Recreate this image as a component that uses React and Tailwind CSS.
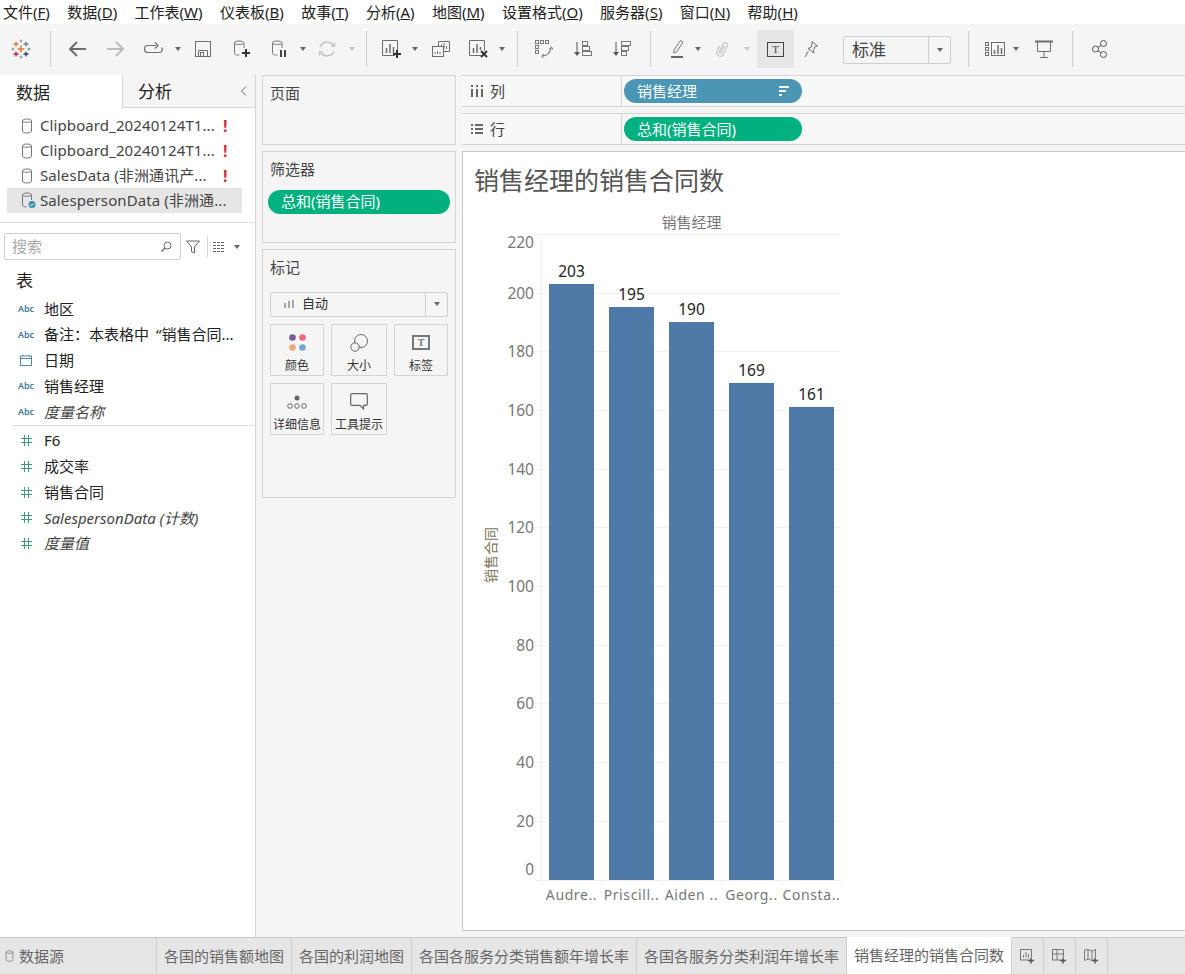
import React from 'react';

const FONT = '"Noto Sans", "Noto Sans CJK SC", sans-serif';

const menus = [
  ['文件(', 'F', ')'], ['数据(', 'D', ')'], ['工作表(', 'W', ')'], ['仪表板(', 'B', ')'], ['故事(', 'T', ')'], ['分析(', 'A', ')'],
  ['地图(', 'M', ')'], ['设置格式(', 'O', ')'], ['服务器(', 'S', ')'], ['窗口(', 'N', ')'], ['帮助(', 'H', ')'],
];

function Sep({ className }) {
  return <div className={`w-px h-9 bg-[#d0d0d0] shrink-0 ${className}`} />;
}

function Caret({ className, light }) {
  return (
    <svg width="6" height="4" viewBox="0 0 6 4" className={`shrink-0 ${className}`}>
      <path d="M0 0h6L3 4z" fill={light ? '#c4c4c4' : '#666'} />
    </svg>
  );
}

function TableauLogo({ className }) {
  const cross = (cx, cy, r, c, sw) => (
    <path d={`M${cx - r} ${cy}H${cx + r}M${cx} ${cy - r}V${cy + r}`} stroke={c} strokeWidth={sw} fill="none" />
  );
  return (
    <svg width="20" height="20" viewBox="0 0 20 20" className={`shrink-0 ${className}`}>
      {cross(10, 10, 3.5, '#e8762b', 1.5)}
      {cross(5, 5, 2.5, '#e8762b', 1.3)}
      {cross(15, 5, 2.5, '#5b879b', 1.3)}
      {cross(5, 15, 2.5, '#c72037', 1.3)}
      {cross(15, 15, 2.5, '#1f447a', 1.3)}
      {cross(10, 2, 1.5, '#7099a6', 1)}
      {cross(10, 18, 1.5, '#7099a6', 1)}
      {cross(2, 10, 1.5, '#7099a6', 1)}
      {cross(18, 10, 1.5, '#5b879b', 1)}
    </svg>
  );
}

function DbIcon({ className, w = 12, h = 16, color = '#777' }) {
  return (
    <svg width={w} height={h} viewBox="0 0 12 16" className={`shrink-0 ${className}`} fill="none" stroke={color}>
      <path d="M1.5 3c0-1.3 2-2 4.5-2s4.5.7 4.5 2v10c0 1.3-2 2-4.5 2s-4.500-.7-4.500-2z" />
      <path d="M1.500 3.500c1 1 8 1 9 0" />
    </svg>
  );
}

function Pill({ color, children, sort, className }) {
  return (
    <div className={`h-6 rounded-full flex items-center justify-between pl-[13px] pr-3 text-white text-[15px] ${color} ${className}`}>
      <span>{children}</span>
      {sort && (
        <svg width="11" height="10" viewBox="0 0 11 10" fill="#fff">
          <rect x="0" y="0" width="10" height="2" />
          <rect x="0" y="4" width="7" height="2" />
          <rect x="0" y="8" width="3" height="2" />
        </svg>
      )}
    </div>
  );
}

function Toolbar() {
  return (
    <div className="h-[51px] pb-px bg-[#f5f5f5] flex items-center shrink-0">
      <TableauLogo className="ml-[11px]" />
      <Sep className="ml-[19px]" />
      <svg width="18" height="16" viewBox="0 0 18 16" className="ml-[17px] shrink-0" fill="none" stroke="#6e6e6e" strokeWidth="2">
        <path d="M18 8H2M9 1L2 8l7 7" />
      </svg>
      <svg width="18" height="16" viewBox="0 0 18 16" className="ml-[21px] shrink-0" fill="none" stroke="#bdbdbd" strokeWidth="2">
        <path d="M0 8h16M9 1l7 7-7 7" />
      </svg>
      <svg width="19" height="14" viewBox="0 0 19 14" className="ml-[19px] shrink-0" fill="none" stroke="#6e6e6e" strokeWidth="1.2">
        <path d="M12 3.500H4a3 3 0 0 0 0 7h11a3 3 0 0 0 2.500-5" />
        <path d="M11 .5l3 3-3 3" />
      </svg>
      <Caret className="ml-3" />
      <svg width="16" height="16" viewBox="0 0 16 16" className="ml-[14px] shrink-0" fill="none" stroke="#6e6e6e">
        <rect x=".5" y=".5" width="15" height="15" />
        <path d="M3.500 15.500v-6h9v6" />
        <rect x="5.500" y="11.500" width="3" height="4" />
      </svg>
      <svg width="17" height="18" viewBox="0 0 17 18" className="ml-[23px] shrink-0" fill="none">
        <g stroke="#777"><path d="M.5 3C.5 1.500 2.500 1 5 1s5 .5 5 2v5M.5 3v10.500c0 1 1.500 1.500 4 1.500h1M.5 3.500c1 1.200 8.500 1.200 9.500 0" /></g>
        <path d="M12 9v8M8 13h8" stroke="#333" strokeWidth="2" />
      </svg>
      <svg width="16" height="18" viewBox="0 0 16 18" className="ml-[21px] shrink-0" fill="none">
        <g stroke="#777"><path d="M.5 3C.5 1.500 2.500 1 5 1s5 .5 5 2v5M.5 3v10.500c0 1 1.500 1.500 4 1.500h1M.5 3.500c1 1.200 8.500 1.200 9.500 0" /></g>
        <path d="M9 10v7M13 10v7" stroke="#444" strokeWidth="2" />
      </svg>
      <Caret className="ml-3" />
      <svg width="18" height="18" viewBox="0 0 18 18" className="ml-3 shrink-0" fill="none" stroke="#c4c4c4" strokeWidth="1.500">
        <path d="M2 7a7.500 7.500 0 0 1 13-2M16 11a7.500 7.500 0 0 1-13 2" />
        <path d="M13 6h3.500V2.500M5 12H1.500v3.500" />
      </svg>
      <Caret light className="ml-[13px]" />
      <Sep className="ml-[11px]" />
      <svg width="20" height="18" viewBox="0 0 20 18" className="ml-[15px] shrink-0" fill="none">
        <path d="M13 15.500H.5V.5h15v10" stroke="#6e6e6e" />
        <path d="M4.500 13V8M8 13V4M11.500 13V7" stroke="#6e6e6e" strokeWidth="1.500" />
        <path d="M15 10v8M11 14h8" stroke="#333" strokeWidth="2" />
      </svg>
      <Caret className="ml-[10px]" />
      <svg width="18" height="16" viewBox="0 0 18 16" className="ml-[14px] shrink-0" fill="none" stroke="#6e6e6e">
        <path d="M6.500 5V.5h11v10H12" />
        <path d="M9.500 8V3.500M12 8V2M14.500 8V5" />
        <rect x=".5" y="5.500" width="11" height="10" fill="#f5f5f5" />
        <path d="M3 13v-2M5.500 13v-3M8 13v-2" />
      </svg>
      <svg width="20" height="18" viewBox="0 0 20 18" className="ml-[19px] shrink-0" fill="none">
        <path d="M12 15.500H.5V.5h15v10" stroke="#6e6e6e" />
        <path d="M4.500 13V8M8 13V4M11.500 10V7" stroke="#6e6e6e" strokeWidth="1.500" />
        <path d="M12 11l6 6M18 11l-6 6" stroke="#333" strokeWidth="2" />
      </svg>
      <Caret className="ml-[10px]" />
      <Sep className="ml-3" />
      <svg width="18" height="18" viewBox="0 0 18 18" className="ml-[17px] shrink-0" fill="none" stroke="#777">
        <rect x=".5" y=".5" width="3" height="3" /><rect x="5.500" y=".5" width="3" height="3" /><rect x="10.500" y=".5" width="3" height="3" />
        <rect x=".5" y="5.500" width="3" height="3" /><rect x=".5" y="10.500" width="3" height="3" />
        <path d="M7 16c5 0 8-3 9-8" strokeWidth="1.200" />
        <path d="M14 9l2.500-2 1.500 3M9 14l-2.500 2 2 2" />
      </svg>
      <svg width="18" height="16" viewBox="0 0 18 16" className="ml-[21px] shrink-0" fill="none" stroke="#777">
        <path d="M3 1v13" stroke="#555" />
        <path d="M0 11l3 4 3-4z" fill="#555" stroke="none" />
        <rect x="8.500" y=".5" width="5" height="4" /><rect x="8.500" y="5.500" width="7" height="4" /><rect x="8.500" y="10.500" width="9" height="4" />
      </svg>
      <svg width="18" height="16" viewBox="0 0 18 16" className="ml-[21px] shrink-0" fill="none" stroke="#777">
        <path d="M3 1v13" stroke="#555" />
        <path d="M0 11l3 4 3-4z" fill="#555" stroke="none" />
        <rect x="8.500" y=".5" width="9" height="4" /><rect x="8.500" y="5.500" width="7" height="4" /><rect x="8.500" y="10.500" width="5" height="4" />
      </svg>
      <Sep className="ml-[19px]" />
      <svg width="14" height="20" viewBox="0 0 14 20" className="ml-[19px] shrink-0" fill="none">
        <path d="M4 11L10.500 1.500l2.500 1.700L6.500 13l-2.800 1z" stroke="#777" />
        <rect x="1" y="17" width="12" height="2" fill="#666" />
      </svg>
      <Caret className="ml-[11px]" />
      <svg width="13" height="18" viewBox="0 0 13 18" className="ml-[15px] shrink-0" fill="none" stroke="#c4c4c4" strokeWidth="1.200">
        <path d="M2.500 7v6a3.500 3.500 0 0 0 7 0V4a2.300 2.300 0 0 0-4.600 0v8.500a1 1 0 0 0 2 0V5" transform="rotate(25 6 9)" />
      </svg>
      <Caret light className="ml-[15px]" />
      <div className="ml-[7px] w-[37px] h-[38px] bg-[#e6e6e6] flex items-center justify-center shrink-0">
        <div className="w-[17px] h-[15px] border border-[#444] flex items-center justify-center text-[11px] leading-none text-[#444] font-['Liberation_Serif',serif]">T</div>
      </div>
      <svg width="14" height="17" viewBox="0 0 14 17" className="ml-[10px] shrink-0" fill="none" stroke="#6e6e6e">
        <path d="M8 .5l5.500 4.500-2.500.5-1.500 4 .5 2.500-6-4.500 3-1 1-3.500zM4.500 10l-3.500 6" />
      </svg>
      <div className="ml-[25px] mt-0.5 w-[108px] h-7 border border-[#cfcfcf] rounded-[2px] flex items-center shrink-0">
        <div className="flex-1 pl-2 text-[17px] text-[#444]">标准</div>
        <div className="w-[22px] h-full border-l border-[#cfcfcf] flex items-center justify-center">
          <Caret />
        </div>
      </div>
      <Sep className="ml-[17px]" />
      <svg width="20" height="14" viewBox="0 0 20 14" className="ml-4 shrink-0" fill="none" stroke="#6e6e6e">
        <rect x=".5" y=".5" width="3" height="3" /><rect x=".5" y="5.500" width="3" height="3" /><rect x=".5" y="10.500" width="3" height="3" />
        <rect x="6.500" y=".5" width="13" height="13" />
        <path d="M9.500 12V8M13 12V3M16.500 12V6" strokeWidth="1.500" />
      </svg>
      <Caret className="ml-2" />
      <svg width="18" height="18" viewBox="0 0 18 18" className="ml-4 shrink-0" fill="none" stroke="#6e6e6e">
        <path d="M0 1.500h18" strokeWidth="2" />
        <path d="M2.500 2v9.500h13V2M9 11.500v5.500M5 17.500h8" />
      </svg>
      <Sep className="ml-[19px]" />
      <svg width="15" height="18" viewBox="0 0 15 18" className="ml-[19px] shrink-0" fill="none" stroke="#555">
        <circle cx="11.500" cy="3.500" r="3" /><circle cx="3.500" cy="9" r="3" /><circle cx="11.500" cy="14.500" r="3" />
        <path d="M6 7.500l3-2.200M6 10.500l3 2.200" />
      </svg>
    </div>
  );
}

function Source({ name, warn, active }) {
  return (
    <div className={`h-[25px] ml-[7px] w-[235px] flex items-center text-[15px] tracking-[0.1px] text-[#444] ${active ? 'bg-[#e6e6e6]' : ''}`}>
      {active ? (
        <svg width="16" height="17" viewBox="0 0 16 17" className="ml-[14px] shrink-0" fill="none">
          <path d="M1.500 3c0-1.300 2-2 4.500-2s4.500.7 4.500 2v5M1.500 3v10c0 1.300 2 2 4 2M1.500 3.500c1 1 8 1 9 0" stroke="#777" />
          <circle cx="11" cy="12.500" r="3.500" fill="#3d8eb0" />
          <path d="M9.200 12.500l1.300 1.300 2.300-2.300" stroke="#fff" />
        </svg>
      ) : (
        <DbIcon className="ml-[14px]" />
      )}
      <span className={`whitespace-nowrap ${active ? 'ml-[3px]' : 'ml-[7px]'}`}>{name}</span>
      {warn && <span className="absolute left-[223px] w-1 text-[16px] font-bold text-[#d0343f]">!</span>}
    </div>
  );
}

function Field({ type, name, italic }) {
  return (
    <div className={`h-[25.75px] flex items-center text-[15px] ${italic ? 'italic text-[#444]' : 'text-[#222]'}`}>
      <div className="w-11 flex justify-center pl-[10px] pr-[2px] shrink-0">
        {type === 'abc' && <span className="not-italic text-[9px] font-semibold text-[#3f7a99]">Abc</span>}
        {type === 'date' && (
          <svg width="12" height="12" viewBox="0 0 12 12" fill="none" stroke="#4f8aa5">
            <rect x=".5" y="2" width="11" height="9.500" /><path d="M.5 4.500h11M3 .5V2M9 .5V2" />
          </svg>
        )}
        {type === 'num' && (
          <svg width="11" height="11" viewBox="0 0 11 11" fill="none" stroke="#3e9c7c">
            <path d="M3.500 0v11M7.500 0v11M0 3.500h11M0 7.500h11" />
          </svg>
        )}
      </div>
      <span className="whitespace-nowrap">{name}</span>
    </div>
  );
}

function DataPane() {
  return (
    <div className="relative w-[256px] h-full bg-white border-r border-[#d4d4d4] shrink-0">
      <div className="flex h-[33px]">
        <div className="w-[122px] pl-4 text-[17px] leading-[35px] text-[#222]">数据</div>
        <div className="flex-1 flex items-center justify-between pl-[15px] pr-2 bg-[#f5f5f5] border-l border-b border-[#d4d4d4] text-[17px] text-[#222]">
          <span className="pt-0.5">分析</span>
          <svg width="7" height="10" viewBox="0 0 7 10" fill="none" stroke="#666"><path d="M6 .5L1.500 5 6 9.500" /></svg>
        </div>
      </div>
      <div className="relative pt-[5px]">
        <Source name="Clipboard_20240124T1..." warn />
        <Source name="Clipboard_20240124T1..." warn />
        <Source name="SalesData (非洲通讯产..." warn />
        <Source name="SalespersonData (非洲通..." active />
      </div>
      <div className="mt-[9px] h-px bg-[#e0e0e0]" />
      <div className="flex items-center mt-2.5 ml-1">
        <div className="w-[177px] h-[27px] border border-[#cfcfcf] rounded-[2px] flex items-center justify-between pl-[7px] pr-2 text-[15px] text-[#a8a8a8]">
          <span>搜索</span>
          <svg width="11" height="11" viewBox="0 0 11 11" fill="none" stroke="#666">
            <circle cx="6.500" cy="4.500" r="3.500" /><path d="M4 7L.5 10.500" strokeWidth="1.300" />
          </svg>
        </div>
        <svg width="14" height="14" viewBox="0 0 14 14" className="ml-[5px]" fill="none" stroke="#666">
          <path d="M.5 1h13L8.500 7v6l-3-1.500V7z" />
        </svg>
        <div className="ml-[7px] w-px h-[22px] bg-[#d8d8d8]" />
        <svg width="12" height="10" viewBox="0 0 12 10" className="ml-[5px]" fill="none" stroke="#666">
          <path d="M0 .5h12M0 3.500h12M0 6.500h12M0 9.500h12" strokeDasharray="3 1" />
        </svg>
        <Caret className="ml-[9px]" />
      </div>
      <div className="pl-4 mt-[9px] text-[17px] leading-6 text-[#222]">表</div>
      <div className="mt-[3px]">
        <Field type="abc" name="地区" />
        <Field type="abc" name={<>备注：本表格中<span className="ml-[7px]">“</span>销售合同...</>} />
        <Field type="date" name="日期" />
        <Field type="abc" name="销售经理" />
        <Field type="abc" name="度量名称" italic />
      </div>
      <div className="ml-3 h-px bg-[#e0e0e0]" />
      <div className="mt-0.5">
        <Field type="num" name="F6" />
        <Field type="num" name="成交率" />
        <Field type="num" name="销售合同" />
        <Field type="num" name="SalespersonData (计数)" italic />
        <Field type="num" name="度量值" italic />
      </div>
    </div>
  );
}

function MarkCard({ label, w, children }) {
  return (
    <div className={`${w} h-[52px] border border-[#d4d4d4] flex flex-col items-center text-[12px] leading-[18px] text-[#333]`}>
      <div className="h-[33px] flex items-center pt-1">{children}</div>
      <span className="whitespace-nowrap">{label}</span>
    </div>
  );
}

function SidePanes() {
  return (
    <div className="w-[206px] h-full bg-[#f5f5f5] px-1.5 flex flex-col gap-1.5 shrink-0">
      <div className="h-[70px] border border-[#d4d4d4] pl-[7px] pt-1.5 text-[15px] text-[#444]">页面</div>
      <div className="h-[92px] border border-[#d4d4d4]">
        <div className="pl-[7px] pt-1.5 text-[15px] text-[#444]">筛选器</div>
        <Pill color="bg-[#00b180]" className="mx-[5px] mt-[9px]">总和(销售合同)</Pill>
      </div>
      <div className="h-[249px] border border-[#d4d4d4] px-[7px]">
        <div className="pt-1.5 text-[15px] text-[#444]">标记</div>
        <div className="mt-[13px] h-[25px] border border-[#cfcfcf] rounded-[2px] flex items-center text-[13px] text-[#333]">
          <svg width="10" height="8" viewBox="0 0 10 8" className="ml-[13px]" fill="#a8a8a8">
            <rect x="0" y="3" width="2" height="5" /><rect x="4" y="1" width="2" height="7" /><rect x="8" y="0" width="2" height="8" />
          </svg>
          <span className="ml-2 flex-1">自动</span>
          <div className="w-[22px] h-full border-l border-[#cfcfcf] flex items-center justify-center"><Caret /></div>
        </div>
        <div className="mt-[7px] grid grid-cols-[54px_56px_54px] gap-[7px]">
          <MarkCard label="颜色" w="w-[54px]">
            <svg width="17" height="17" viewBox="0 0 17 17">
              <circle cx="3.500" cy="3.500" r="3.300" fill="#7b5e93" /><circle cx="13.500" cy="3.500" r="3.300" fill="#f0667c" />
              <circle cx="3.500" cy="13.500" r="3.300" fill="#f3a77d" /><circle cx="13.500" cy="13.500" r="3.300" fill="#7aa3cf" />
            </svg>
          </MarkCard>
          <MarkCard label="大小" w="w-[56px]">
            <svg width="18" height="18" viewBox="0 0 18 18" fill="none" stroke="#666">
              <circle cx="11" cy="7" r="6.500" /><circle cx="5" cy="13" r="4.200" fill="#f5f5f5" />
            </svg>
          </MarkCard>
          <MarkCard label="标签" w="w-[54px]">
            <div className="w-[18px] h-[15px] border-2 border-[#777] flex items-center justify-center text-[10px] font-bold leading-none text-[#777] font-['Liberation_Serif',serif]">T</div>
          </MarkCard>
          <MarkCard label="详细信息" w="w-[54px]">
            <svg width="20" height="14" viewBox="0 0 20 14" fill="none" stroke="#666">
              <circle cx="10" cy="3" r="2.500" fill="#666" stroke="none" />
              <circle cx="3" cy="11" r="2.300" /><circle cx="10" cy="11" r="2.300" /><circle cx="17" cy="11" r="2.300" />
            </svg>
          </MarkCard>
          <MarkCard label="工具提示" w="w-[56px]">
            <svg width="18" height="17" viewBox="0 0 18 17" fill="none" stroke="#666" strokeWidth="1.200">
              <path d="M2 .7h14a1.300 1.300 0 0 1 1.300 1.300v9a1.300 1.300 0 0 1-1.300 1.300h-2.500V16L10 12.300H2A1.300 1.300 0 0 1 .7 11V2A1.300 1.300 0 0 1 2 .7z" />
            </svg>
          </MarkCard>
        </div>
      </div>
    </div>
  );
}

function Shelf({ icon, label, children }) {
  return (
    <div className="h-8 flex border-y border-[#d4d4d4] bg-[#f7f7f7] shrink-0">
      <div className="w-[160px] flex items-center pl-[9px] border-r border-[#d4d4d4] text-[15px] text-[#444]">
        <div className="w-[19px] flex justify-start">{icon}</div>
        <span>{label}</span>
      </div>
      <div className="pl-[2px] flex items-center">{children}</div>
    </div>
  );
}

const rows = [
  { name: 'Audre..', value: 203, x: 549 },
  { name: 'Priscill..', value: 195, x: 609 },
  { name: 'Aiden ..', value: 190, x: 669 },
  { name: 'Georg..', value: 169, x: 729 },
  { name: 'Consta..', value: 161, x: 789 },
];
const ticks = [220, 200, 180, 160, 140, 120, 100, 80, 60, 40, 20, 0];
const yOf = (v) => Math.floor(880 - v * 2.935);

function Chart() {
  return (
    <svg width="370" height="700" viewBox="480 210 370 700" className="block ml-[17px] mt-[11px] shrink-0" style={{ fontFamily: FONT }}>
      <text x="691.500" y="227.500" textAnchor="middle" className="text-[15px] fill-[#777]">销售经理</text>
      <text transform="translate(496 555) rotate(-90)" textAnchor="middle" className="text-[14px] fill-[#7d7660]">销售合同</text>
      {ticks.map((t) => (
        <path key={t} d={`M536 ${yOf(t) + 0.5}H840`} stroke="#f0f0f0" />
      ))}
      <path d="M541.500 234V885" stroke="#f0f0f0" />
      {[541, 601, 661, 721, 781, 841].map((x) => (
        <path key={x} d={`M${x + 0.5} 880V885`} stroke="#f0f0f0" />
      ))}
      {ticks.map((t) => {
        const y = t === 220 ? 242 : t === 0 ? 869 : yOf(t);
        return (
          <text key={t} x="534" y={y} dy="5.500" textAnchor="end" className="text-[15.500px] fill-[#777]">{t}</text>
        );
      })}
      {rows.map((r) => (
        <g key={r.name}>
          <rect x={r.x} y={yOf(r.value)} width="45" height={880 - yOf(r.value)} fill="#4e79a7" />
          <text x={r.x + 22.5} y={yOf(r.value) - 7} textAnchor="middle" className="text-[15.500px] fill-[#222]">{r.value}</text>
          <text x={r.x + 22.5} y="899.500" textAnchor="middle" letterSpacing="0.6" className="text-[14px] fill-[#777]">{r.name}</text>
        </g>
      ))}
    </svg>
  );
}

function Viz() {
  return (
    <div className="mt-1.5 h-[780px] bg-white border border-r-0 border-[#c8c8c8] flex flex-col shrink-0 overflow-hidden">
      <div className="pl-[11px] pt-[9px] text-[25px] leading-[38px] text-[#555] whitespace-nowrap">销售经理的销售合同数</div>
      <Chart />
    </div>
  );
}

const tabs = [
  '各国的销售额地图', '各国的利润地图', '各国各服务分类销售额年增长率', '各国各服务分类利润年增长率',
];

function TabBar() {
  return (
    <div className="h-[37px] bg-[#e6e6e6] border-t border-[#c8c8c8] flex items-stretch text-[15px] text-[#666] shrink-0">
      <div className="w-[157px] border-r border-[#d0d0d0] flex items-center pl-[5px]">
        <DbIcon w={9} h={12} />
        <span className="ml-[5px]">数据源</span>
      </div>
      {tabs.map((t) => (
        <div key={t} className="px-[7px] border-r border-[#d0d0d0] flex items-center whitespace-nowrap">{t}</div>
      ))}
      <div className="px-[7px] -mt-px bg-white border-r border-[#d0d0d0] flex items-center whitespace-nowrap">销售经理的销售合同数</div>
      <div className="w-8 border-r border-[#d0d0d0] flex items-center justify-center">
        <svg width="15" height="15" viewBox="0 0 15 15" fill="none">
          <path d="M9 11H.5V.5h11V8" stroke="#777" /><path d="M3.500 8.500V6M6 8.500V3M8.500 8.500V5" stroke="#777" />
          <path d="M11 8.500v6M8 11.500h6" stroke="#555" strokeWidth="1.500" />
        </svg>
      </div>
      <div className="w-8 border-r border-[#d0d0d0] flex items-center justify-center">
        <svg width="15" height="15" viewBox="0 0 15 15" fill="none">
          <path d="M9 11H.5V.5h11V8M.5 5h11M5 .5V11" stroke="#777" />
          <path d="M11 8.500v6M8 11.500h6" stroke="#555" strokeWidth="1.500" />
        </svg>
      </div>
      <div className="w-8 border-r border-[#d0d0d0] flex items-center justify-center">
        <svg width="15" height="15" viewBox="0 0 15 15" fill="none">
          <path d="M8 11.500L4 10 .5 11.500V1L4 .5 8 2l3.500-1.500V8M4 .5V10M8 2v9" stroke="#777" />
          <path d="M11 8.500v6M8 11.500h6" stroke="#555" strokeWidth="1.500" />
        </svg>
      </div>
    </div>
  );
}

export default function App() {
  return (
    <div className="h-screen w-full overflow-hidden flex flex-col bg-white" style={{ fontFamily: FONT }}>
      <div className="h-6 flex items-center gap-[17.4px] pl-[3px] text-[15px] text-[#222] shrink-0 whitespace-nowrap">
        {menus.map(([a, k, b]) => (
          <span key={k}>{a}<span className="underline">{k}</span>{b}</span>
        ))}
      </div>
      <Toolbar />
      <div className="h-[862px] flex shrink-0">
        <DataPane />
        <SidePanes />
        <div className="flex-1 min-w-0 bg-[#f5f5f5] flex flex-col">
          <Shelf
            label="列"
            icon={
              <svg width="12" height="12" viewBox="0 0 12 12" fill="#666">
                <path d="M0 0h2v2H0zM5 0h2v2H5zM10 0h2v2h-2zM0 4h2v8H0zM5 4h2v8H5zM10 4h2v8h-2z" />
              </svg>
            }
          >
            <Pill color="bg-[#4a96b4]" sort className="w-[178px]">销售经理</Pill>
          </Shelf>
          <div className="h-1.5 shrink-0" />
          <Shelf
            label="行"
            icon={
              <svg width="12" height="10" viewBox="0 0 12 10" fill="#666">
                <path d="M0 0h2v2H0zM4 0h8v2H4zM0 4h2v2H0zM4 4h8v2H4zM0 8h2v2H0zM4 8h8v2H4z" />
              </svg>
            }
          >
            <Pill color="bg-[#00b180]" className="w-[178px]">总和(销售合同)</Pill>
          </Shelf>
          <Viz />
        </div>
      </div>
      <TabBar />
    </div>
  );
}
